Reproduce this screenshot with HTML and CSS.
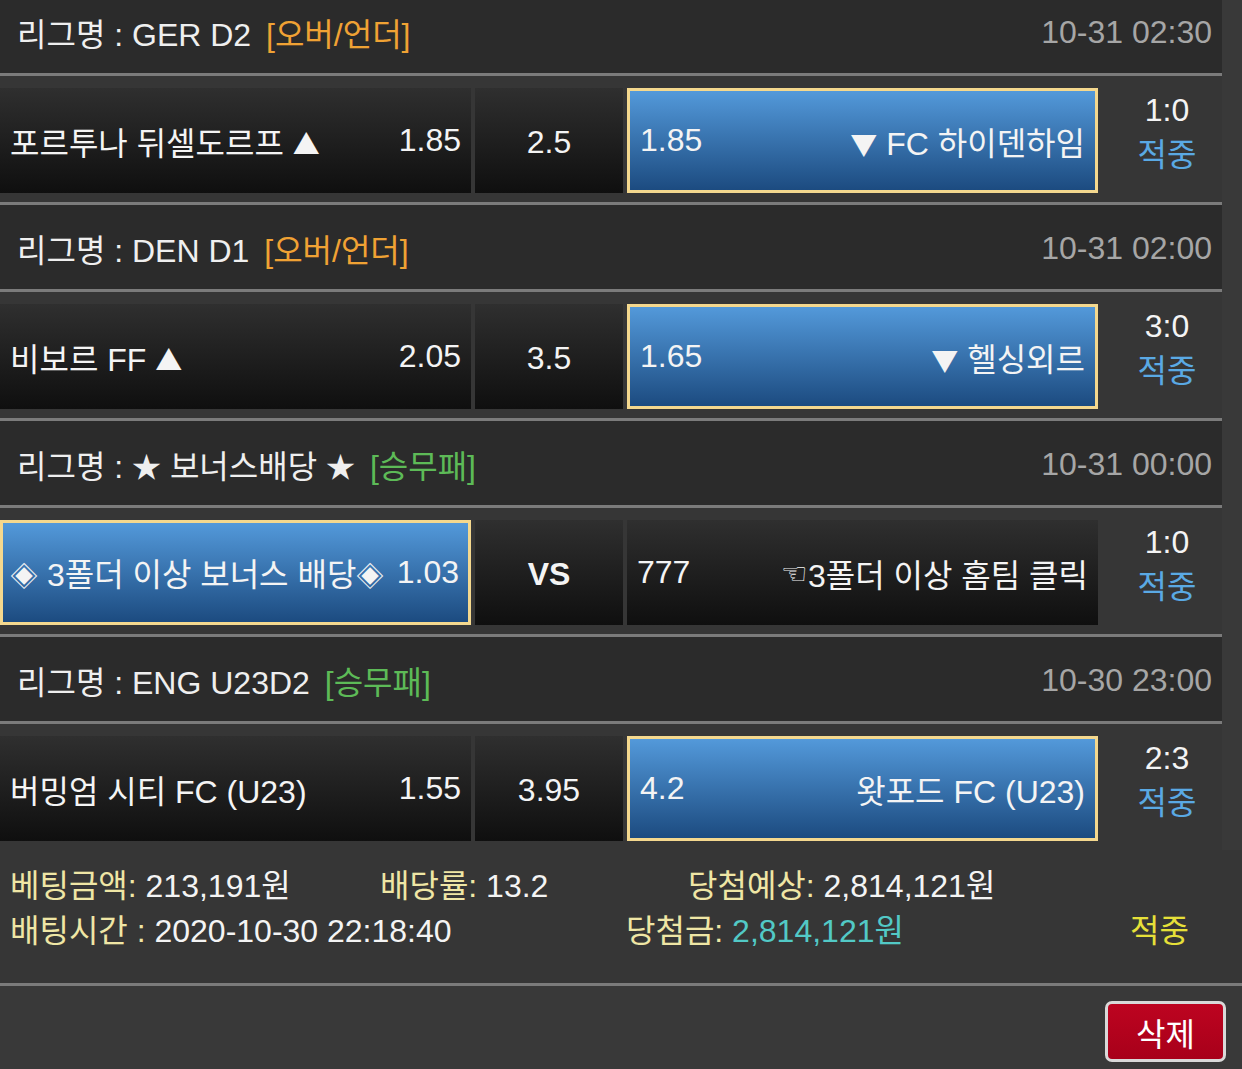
FILE: index.html
```html
<!DOCTYPE html>
<html lang="ko">
<head>
<meta charset="utf-8">
<title>베팅내역</title>
<link rel="stylesheet" href="styles.css">
</head>
<body>
<div class="list">
  <div class="league">
    <div class="league-name">리그명 : GER D2 <span class="tag tag-ou">[오버/언더]</span></div>
    <div class="time">10-31 02:30</div>
  </div>
  <div class="match">
    <div class="cell side"><span>포르투나 뒤셀도르프 <span class="sym">▲</span></span><span>1.85</span></div>
    <div class="cell mid">2.5</div>
    <div class="cell side sel"><span>1.85</span><span><span class="sym">▼</span> FC 하이덴하임</span></div>
    <div class="score"><span>1:0</span><span class="hit">적중</span></div>
  </div>

  <div class="league">
    <div class="league-name">리그명 : DEN D1 <span class="tag tag-ou">[오버/언더]</span></div>
    <div class="time">10-31 02:00</div>
  </div>
  <div class="match">
    <div class="cell side"><span>비보르 FF <span class="sym">▲</span></span><span>2.05</span></div>
    <div class="cell mid">3.5</div>
    <div class="cell side sel"><span>1.65</span><span><span class="sym">▼</span> 헬싱외르</span></div>
    <div class="score"><span>3:0</span><span class="hit">적중</span></div>
  </div>

  <div class="league">
    <div class="league-name">리그명 : <span class="star">★</span> 보너스배당 <span class="star">★</span> <span class="tag tag-wdl">[승무패]</span></div>
    <div class="time">10-31 00:00</div>
  </div>
  <div class="match">
    <div class="cell side sel bonus"><span><span class="dia">◈</span> 3폴더 이상 보너스 배당<span class="dia">◈</span></span><span>1.03</span></div>
    <div class="cell mid vs">VS</div>
    <div class="cell side"><span>777</span><span><span class="hand">☜</span>3폴더 이상 홈팀 클릭</span></div>
    <div class="score"><span>1:0</span><span class="hit">적중</span></div>
  </div>

  <div class="league">
    <div class="league-name">리그명 : ENG U23D2 <span class="tag tag-wdl">[승무패]</span></div>
    <div class="time">10-30 23:00</div>
  </div>
  <div class="match">
    <div class="cell side"><span>버밍엄 시티 FC (U23)</span><span>1.55</span></div>
    <div class="cell mid">3.95</div>
    <div class="cell side sel"><span>4.2</span><span>왓포드 FC (U23)</span></div>
    <div class="score"><span>2:3</span><span class="hit">적중</span></div>
  </div>
</div>

<div class="summary">
  <div class="sum-row">
    <div class="sum-a"><span class="label">베팅금액:</span> 213,191원</div>
    <div class="sum-b"><span class="label">배당률:</span> 13.2</div>
    <div class="sum-c"><span class="label">당첨예상:</span> 2,814,121원</div>
  </div>
  <div class="sum-row">
    <div class="sum-wide"><span class="label">배팅시간 :</span> 2020-10-30 22:18:40</div>
    <div class="sum-win"><span class="label">당첨금:</span> <span class="win">2,814,121원</span></div>
    <div class="result">적중</div>
  </div>
</div>

<div class="actions">
  <button class="btn-delete" type="button">삭제</button>
</div>
</body>
</html>
```
FILE: styles.css
```css
* {
  box-sizing: border-box;
  margin: 0;
  padding: 0;
}

html, body {
  width: 1242px;
  height: 1069px;
  overflow: hidden;
}

body {
  background: #393939;
  color: #f4f4f4;
  font-family: "Liberation Sans", "Noto Sans CJK KR", sans-serif;
  font-size: 32px;
}

.list {
  width: 1222px;
  margin-top: -11px;
}

.league {
  height: 87px;
  background: #2b2b2b;
  border-bottom: 3px solid #7b7b7b;
  display: flex;
  align-items: center;
  justify-content: space-between;
  padding: 2px 10px 0 17px;
  white-space: nowrap;
}

.league-name {
  color: #efefef;
}

.star {
  font-family: "Noto Sans CJK KR", sans-serif;
  font-size: 29px;
}

.tag {
  margin-left: 6px;
}

.tag-ou {
  color: #f0a234;
}

.tag-wdl {
  color: #5dba57;
}

.time {
  color: #a6a6a6;
}

.match {
  height: 129px;
  background: #363636;
  border-bottom: 3px solid #7b7b7b;
  display: flex;
  gap: 4px;
  padding: 12px 0 9px;
}

.match:last-child {
  border-bottom: none;
  height: 126px;
}

.cell {
  flex: none;
  height: 105px;
  display: flex;
  align-items: center;
  justify-content: space-between;
  background: linear-gradient(#2f2f2f, #0f0f0f);
  white-space: nowrap;
}

.side {
  width: 471px;
  padding: 0 10px;
}

.bonus {
  padding: 0 9px 0 7px;
}

.mid {
  width: 148px;
  justify-content: center;
  padding-top: 4px;
}

.vs {
  font-weight: bold;
}

.sel {
  background: linear-gradient(#5399da, #1c4b80);
  border: 3px solid #f4d88e;
}

.sym {
  font-family: "Noto Sans CJK KR", sans-serif;
  font-size: 27px;
}

.dia {
  font-family: "Noto Sans CJK KR", sans-serif;
  font-size: 28px;
}

.hand {
  font-family: "DejaVu Sans", sans-serif;
  font-size: 30px;
  vertical-align: 3px;
}

.score {
  flex: none;
  width: 120px;
  padding-left: 10px;
  display: flex;
  flex-direction: column;
  align-items: center;
  line-height: 45px;
}

.hit {
  color: #5aa9e4;
}

.summary {
  background: #363636;
  border-bottom: 3px solid #7b7b7b;
  padding: 14px 10px 29px;
  line-height: 45px;
  white-space: nowrap;
}

.sum-row {
  display: flex;
}

.label {
  color: #efe6a5;
}

.sum-a {
  width: 370px;
}

.sum-b {
  width: 308px;
}

.sum-wide {
  width: 616px;
}

.sum-win {
  width: 504px;
}

.win {
  color: #52c9c6;
}

.result {
  color: #e6e039;
}

.actions {
  display: flex;
  justify-content: flex-end;
  padding: 15px 16px 0 0;
}

.btn-delete {
  width: 121px;
  height: 61px;
  background: linear-gradient(#bd0420, #a8001a);
  border: 3px solid #d9d9d9;
  border-radius: 7px;
  color: #ffffff;
  font-family: "Liberation Sans", "Noto Sans CJK KR", sans-serif;
  font-size: 32px;
}
```
